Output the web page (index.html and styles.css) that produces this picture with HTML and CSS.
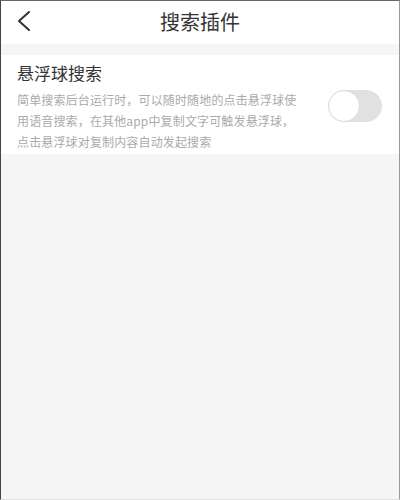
FILE: index.html
```html
<!DOCTYPE html>
<html lang="zh-CN">
<head>
<meta charset="utf-8">
<title>搜索插件</title>
<link rel="stylesheet" href="styles.css">
</head>
<body>
<div class="frame">
  <header class="topbar">
    <span class="back" aria-label="返回">
      <svg width="14" height="22" viewBox="0 0 14 22"><polyline points="12,2 2,11 12,20" fill="none" stroke="#333" stroke-width="2" stroke-linecap="round" stroke-linejoin="round"/></svg>
    </span>
    <h1 class="title">搜索插件</h1>
  </header>
  <div class="gap"></div>
  <section class="item">
    <div class="text">
      <div class="item-title">悬浮球搜索</div>
      <div class="desc">简单搜索后台运行时，可以随时随地的点击悬浮球使<br>用语音搜索，在其他app中复制文字可触发悬浮球，<br>点击悬浮球对复制内容自动发起搜索</div>
    </div>
    <div class="switch"><span class="knob"></span></div>
  </section>
</div>
</body>
</html>
```
FILE: styles.css
```css
html, body {
  margin: 0;
  padding: 0;
}
body {
  font-family: "Noto Sans CJK SC", "Noto Sans", sans-serif;
  background: #fff;
}
.frame {
  box-sizing: border-box;
  width: 400px;
  height: 500px;
  background: #f5f5f5;
  border-left: 1px solid #444;
  border-top: 1px solid #666;
  border-right: 1px solid #999;
  border-bottom: 1px solid #e0e0e0;
  display: flex;
  flex-direction: column;
}
.topbar {
  height: 43px;
  background: #fff;
  display: flex;
  align-items: center;
  justify-content: center;
  position: relative;
}
.back {
  position: absolute;
  left: 16px;
  top: 9px;
  width: 14px;
  height: 22px;
  display: block;
}
.back svg { display: block; }
.title {
  margin: 0;
  font-size: 20px;
  font-weight: normal;
  color: #333;
  line-height: 24px;
  margin-top: -2px;
}
.gap {
  height: 11px;
}
.item {
  background: #fff;
  display: flex;
  align-items: center;
  padding: 6px 17px 2px 16px;
}
.text {
  flex: 1;
}
.item-title {
  font-size: 17px;
  line-height: 24px;
  color: #333;
  margin-bottom: 4px;
}
.desc {
  font-size: 12px;
  line-height: 21px;
  letter-spacing: 0.15px;
  color: #aaa;
  white-space: nowrap;
}
.switch {
  width: 54px;
  height: 32px;
  margin-top: -2px;
  border-radius: 16px;
  background: #e1e1e1;
  position: relative;
  flex: none;
}
.knob {
  position: absolute;
  left: 0;
  top: 0;
  box-sizing: border-box;
  width: 32px;
  height: 32px;
  border-radius: 50%;
  background: #fff;
  border: 1px solid #dcdcdc;
}
```
